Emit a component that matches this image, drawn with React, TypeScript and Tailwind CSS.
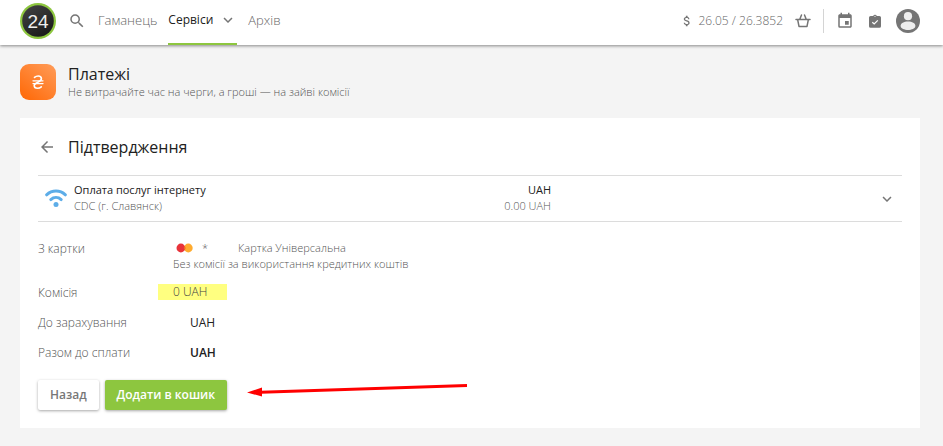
import type { ReactNode } from "react";
import {
  MdArrowBack,
  MdAttachMoney,
  MdEvent,
  MdExpandMore,
  MdSearch,
} from "react-icons/md";
import clsx from "clsx";

const App = () => {
  return (
    <div className="min-h-screen bg-[#f4f4f4] pb-[18px] font-['Open_Sans',sans-serif] text-[#212121]">
      <Header />
      <main className="pl-5 pr-[23px]">
        <PageTitle />
        <Confirmation />
      </main>
    </div>
  );
};

export default App;

const Header = () => {
  return (
    <header className="flex items-start justify-between bg-white pl-5 pr-[23px] text-[13px] font-light text-[#666] shadow-[0_1px_3px_rgba(0,0,0,0.45)]">
      <div className="flex items-start">
        <div className="flex h-[42px] items-center">
          <a href="#home" aria-label="24">
            <Logo />
          </a>
          <button type="button" aria-label="Пошук" className="ml-3 text-[#757575]">
            <MdSearch className="size-[18px]" />
          </button>
        </div>
        <nav className="ml-3 flex items-start gap-[11px] leading-10">
          <a href="#wallet">Гаманець</a>
          <a
            href="#services"
            className="flex items-center gap-1.5 border-b-2 border-[#8dc63f] pb-[3px] text-xs leading-10 font-normal text-[#212121]"
          >
            Сервіси
            <MdExpandMore className="size-[18px] text-[#757575]" />
          </a>
          <a href="#archive">Архів</a>
        </nav>
      </div>
      <div className="flex h-[42px] items-center text-[#757575]">
        <MdAttachMoney className="size-3.5" />
        <span className="ml-1 text-xs leading-10 text-[#666]">26.05 / 26.3852</span>
        <button type="button" aria-label="Кошик" className="ml-3">
          <BasketIcon />
        </button>
        <div className="mx-3 h-6 w-px bg-[#d4d4d4]" />
        <button type="button" aria-label="Календар">
          <MdEvent className="size-[18px]" />
        </button>
        <button type="button" aria-label="Завдання" className="ml-[15px]">
          <TaskIcon />
        </button>
        <button type="button" aria-label="Профіль" className="ml-[15px]">
          <AvatarIcon />
        </button>
      </div>
    </header>
  );
};

const PageTitle = () => {
  return (
    <div className="flex items-center gap-3 pb-[18px] pt-[19px]">
      <HryvniaIcon />
      <div>
        <h1 className="text-base leading-5">Платежі</h1>
        <p className="text-[11px] font-light leading-4 text-[#555]">
          Не витрачайте час на черги, а гроші — на зайві комісії
        </p>
      </div>
    </div>
  );
};

const Confirmation = () => {
  return (
    <section className="bg-white p-[18px]">
      <div className="flex items-center gap-3">
        <button type="button" aria-label="Назад до списку" className="text-[#757575]">
          <MdArrowBack className="size-[18px]" />
        </button>
        <h2 className="text-base leading-[22px]">Підтвердження</h2>
      </div>

      <div className="mt-[17px] flex h-[47px] items-center border-y border-[#dcdcdc] pl-1.5 text-[11px] leading-4">
        <WifiIcon />
        <div className="ml-1.5 w-[331px] pb-0.5">
          <p>Оплата послуг інтернету</p>
          <p className="font-light text-[#555]">CDC (г. Славянск)</p>
        </div>
        <div className="w-[146px] pb-0.5 text-right">
          <p>UAH</p>
          <p className="font-light text-[#555]">0.00 UAH</p>
        </div>
        <button type="button" aria-label="Деталі" className="ml-auto mr-1.5 text-[#757575]">
          <MdExpandMore className="size-[18px]" />
        </button>
      </div>

      <dl className="mt-[18px] text-xs font-light leading-[18px] text-[#555]">
        <Row label="З картки">
          <div className="flex items-center pl-[3px] text-[11px] leading-4">
            <CardBrandIcon />
            <span className="ml-2">*</span>
            <span className="ml-[30px]">Картка Універсальна</span>
          </div>
          <p className="text-[11px] leading-4">
            Без комісії за використання кредитних коштів
          </p>
        </Row>
        <Row label="Комісія" className="mt-3">
          <span className="-ml-[15px] block w-[69px] bg-[#ffff80] pl-[15px] leading-4 text-[#444]">
            0 UAH
          </span>
        </Row>
        <Row label="До зарахування" className="mt-3">
          <span className="pl-[17px] font-normal text-[#212121]">UAH</span>
        </Row>
        <Row label="Разом до сплати" className="mt-3">
          <span className="pl-[17px] font-semibold text-[#212121]">UAH</span>
        </Row>
      </dl>

      <div className="mt-[18px] flex items-start">
        <button
          type="button"
          className="h-[30px] rounded-xs bg-white px-3 text-xs font-semibold text-[#777] shadow-[0_1px_3px_rgba(0,0,0,0.35)]"
        >
          Назад
        </button>
        <button
          type="button"
          className="ml-1.5 h-[30px] rounded-xs bg-[#8dc63f] px-3 text-xs font-semibold text-white shadow-[0_1px_3px_rgba(0,0,0,0.35)]"
        >
          Додати в кошик
        </button>
        <PointerArrow />
      </div>
    </section>
  );
};

interface RowProps {
  label: string;
  className?: string;
  children: ReactNode;
}

const Row = ({ label, className, children }: RowProps) => {
  return (
    <div className={clsx("flex", className)}>
      <dt className="w-[135px] shrink-0">{label}</dt>
      <dd>{children}</dd>
    </div>
  );
};

const Logo = () => {
  return (
    <svg viewBox="0 0 36 36" className="size-9">
      <defs>
        <linearGradient id="logo-fill" x1="0" y1="0" x2="0.6" y2="1">
          <stop offset="0" stopColor="#444" />
          <stop offset="1" stopColor="#1c1c1c" />
        </linearGradient>
      </defs>
      <circle cx="18" cy="18" r="18" fill="#8dc63f" />
      <circle cx="18" cy="18" r="15.8" fill="url(#logo-fill)" />
      <text
        x="18"
        y="24.7"
        textAnchor="middle"
        fontSize="19"
        fill="#eee"
        fontWeight="400"
        fontFamily="Liberation Sans, sans-serif"
      >
        24
      </text>
    </svg>
  );
};

const HryvniaIcon = () => {
  return (
    <svg viewBox="0 0 36 36" className="size-9" aria-hidden="true">
      <defs>
        <linearGradient id="pay-fill" x1="1" y1="0" x2="0.2" y2="1">
          <stop offset="0" stopColor="#ff9c59" />
          <stop offset="1" stopColor="#ff6c0c" />
        </linearGradient>
      </defs>
      <rect width="36" height="36" rx="9" fill="url(#pay-fill)" />
      <g fill="none" stroke="#fff" strokeWidth="1.6" strokeLinecap="round">
        <path d="M14.5 13.4C15.8 12.3 17 12 18.2 12c2 0 3.2 1.1 3.2 2.7 0 3.6-7.2 3.3-7.2 6.9 0 1.7 1.3 2.7 3.2 2.7 1.4 0 2.8-.5 3.9-1.5" />
        <path d="M13 16.8h10M13 19.6h10" strokeWidth="1.3" />
      </g>
    </svg>
  );
};

const WifiIcon = () => {
  return (
    <svg
      viewBox="0 0 24 24"
      className="size-6"
      fill="none"
      stroke="#5dade8"
      strokeWidth="3"
      strokeLinecap="round"
      aria-hidden="true"
    >
      <path d="M2.6 7.8c5.4-5 13.4-5 18.8 0M6.8 12.6c3-2.7 7.4-2.7 10.4 0" />
      <circle cx="12" cy="17.6" r="2.5" fill="#5dade8" stroke="none" />
    </svg>
  );
};

const BasketIcon = () => {
  return (
    <svg
      viewBox="0 0 16 16"
      className="size-4"
      fill="none"
      stroke="currentColor"
      strokeWidth="1.5"
      strokeLinejoin="round"
      strokeLinecap="round"
    >
      <path d="M1 6.4h14M2.6 6.4l1.4 7h8l1.4-7M4.8 6.2L6.5 2M11.2 6.2L9.5 2" />
    </svg>
  );
};

const TaskIcon = () => {
  return (
    <svg viewBox="0 0 12 14" className="h-3.5 w-3">
      <path
        fill="currentColor"
        d="M1.6 2h2.6a1.9 1.9 0 0 1 3.6 0h2.6A1.6 1.6 0 0 1 12 3.6v8.6a1.6 1.6 0 0 1-1.6 1.6H1.6A1.6 1.6 0 0 1 0 12.2V3.6A1.6 1.6 0 0 1 1.6 2z"
      />
      <circle cx="6" cy="2.3" r="0.6" fill="#fff" />
      <path d="M3.3 8.2l1.9 1.8 3.6-3.7" fill="none" stroke="#fff" strokeWidth="1.2" />
    </svg>
  );
};

const AvatarIcon = () => {
  return (
    <svg viewBox="0 0 24 24" className="size-6">
      <circle cx="12" cy="12" r="12" fill="#757575" />
      <circle cx="12" cy="7.2" r="4.1" fill="#eee" />
      <path
        d="M4.6 17c0-3 3.3-4.6 7.4-4.6s7.4 1.6 7.4 4.6c0 2.4-3.9 4-7.4 4s-7.4-1.6-7.4-4z"
        fill="#eee"
      />
    </svg>
  );
};

const CardBrandIcon = () => {
  return (
    <svg viewBox="0 0 18 10" className="h-2.5 w-[18px]" aria-hidden="true">
      <circle cx="12.3" cy="5" r="4.4" fill="#ffab2e" />
      <circle cx="4.9" cy="5" r="4.4" fill="#e8333a" />
      <path d="M8.6 2.6a4.4 4.4 0 0 1 0 4.8a4.4 4.4 0 0 1 0-4.8z" fill="#f26b22" />
    </svg>
  );
};

const PointerArrow = () => {
  return (
    <svg viewBox="0 0 220 20" className="ml-5 h-5 w-[220px]" aria-hidden="true">
      <path d="M14 12.2L220 5.5" stroke="red" strokeWidth="3" fill="none" />
      <path d="M0 12.5l15-5v9z" fill="red" />
    </svg>
  );
};
